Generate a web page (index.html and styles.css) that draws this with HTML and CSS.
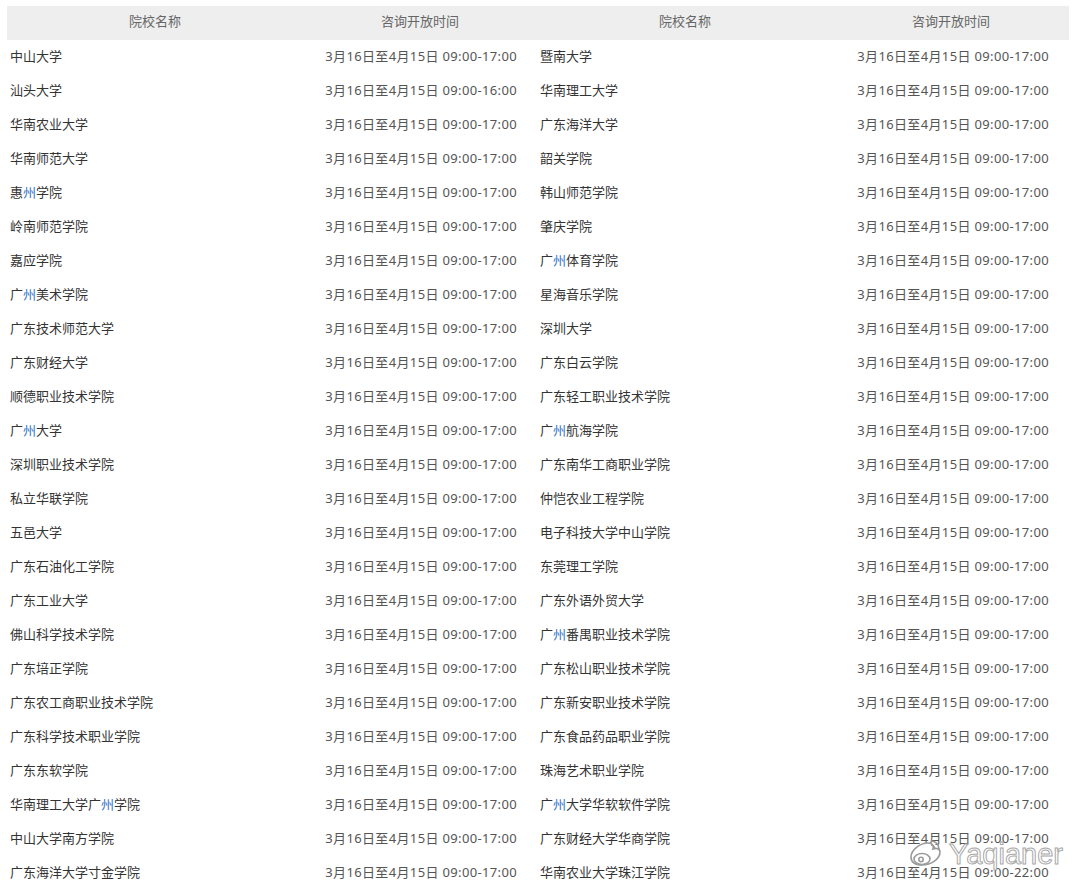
FILE: index.html
```html
<!DOCTYPE html>
<html lang="zh-CN">
<head>
<meta charset="utf-8">
<title>咨询开放时间</title>
<link rel="stylesheet" href="styles.css">
</head>
<body>
<table class="schedule">
  <colgroup>
    <col class="c-name"><col class="c-time"><col class="c-name"><col class="c-time2">
  </colgroup>
  <thead>
    <tr><th>院校名称</th><th>咨询开放时间</th><th>院校名称</th><th>咨询开放时间</th></tr>
  </thead>
  <tbody>
    <tr><td class="name">中山大学</td><td class="time">3月16日至4月15日 09:00-17:00</td><td class="name">暨南大学</td><td class="time">3月16日至4月15日 09:00-17:00</td></tr>
    <tr><td class="name">汕头大学</td><td class="time">3月16日至4月15日 09:00-16:00</td><td class="name">华南理工大学</td><td class="time">3月16日至4月15日 09:00-17:00</td></tr>
    <tr><td class="name">华南农业大学</td><td class="time">3月16日至4月15日 09:00-17:00</td><td class="name">广东海洋大学</td><td class="time">3月16日至4月15日 09:00-17:00</td></tr>
    <tr><td class="name">华南师范大学</td><td class="time">3月16日至4月15日 09:00-17:00</td><td class="name">韶关学院</td><td class="time">3月16日至4月15日 09:00-17:00</td></tr>
    <tr><td class="name">惠<span class="link">州</span>学院</td><td class="time">3月16日至4月15日 09:00-17:00</td><td class="name">韩山师范学院</td><td class="time">3月16日至4月15日 09:00-17:00</td></tr>
    <tr><td class="name">岭南师范学院</td><td class="time">3月16日至4月15日 09:00-17:00</td><td class="name">肇庆学院</td><td class="time">3月16日至4月15日 09:00-17:00</td></tr>
    <tr><td class="name">嘉应学院</td><td class="time">3月16日至4月15日 09:00-17:00</td><td class="name">广<span class="link">州</span>体育学院</td><td class="time">3月16日至4月15日 09:00-17:00</td></tr>
    <tr><td class="name">广<span class="link">州</span>美术学院</td><td class="time">3月16日至4月15日 09:00-17:00</td><td class="name">星海音乐学院</td><td class="time">3月16日至4月15日 09:00-17:00</td></tr>
    <tr><td class="name">广东技术师范大学</td><td class="time">3月16日至4月15日 09:00-17:00</td><td class="name">深圳大学</td><td class="time">3月16日至4月15日 09:00-17:00</td></tr>
    <tr><td class="name">广东财经大学</td><td class="time">3月16日至4月15日 09:00-17:00</td><td class="name">广东白云学院</td><td class="time">3月16日至4月15日 09:00-17:00</td></tr>
    <tr><td class="name">顺德职业技术学院</td><td class="time">3月16日至4月15日 09:00-17:00</td><td class="name">广东轻工职业技术学院</td><td class="time">3月16日至4月15日 09:00-17:00</td></tr>
    <tr><td class="name">广<span class="link">州</span>大学</td><td class="time">3月16日至4月15日 09:00-17:00</td><td class="name">广<span class="link">州</span>航海学院</td><td class="time">3月16日至4月15日 09:00-17:00</td></tr>
    <tr><td class="name">深圳职业技术学院</td><td class="time">3月16日至4月15日 09:00-17:00</td><td class="name">广东南华工商职业学院</td><td class="time">3月16日至4月15日 09:00-17:00</td></tr>
    <tr><td class="name">私立华联学院</td><td class="time">3月16日至4月15日 09:00-17:00</td><td class="name">仲恺农业工程学院</td><td class="time">3月16日至4月15日 09:00-17:00</td></tr>
    <tr><td class="name">五邑大学</td><td class="time">3月16日至4月15日 09:00-17:00</td><td class="name">电子科技大学中山学院</td><td class="time">3月16日至4月15日 09:00-17:00</td></tr>
    <tr><td class="name">广东石油化工学院</td><td class="time">3月16日至4月15日 09:00-17:00</td><td class="name">东莞理工学院</td><td class="time">3月16日至4月15日 09:00-17:00</td></tr>
    <tr><td class="name">广东工业大学</td><td class="time">3月16日至4月15日 09:00-17:00</td><td class="name">广东外语外贸大学</td><td class="time">3月16日至4月15日 09:00-17:00</td></tr>
    <tr><td class="name">佛山科学技术学院</td><td class="time">3月16日至4月15日 09:00-17:00</td><td class="name">广<span class="link">州</span>番禺职业技术学院</td><td class="time">3月16日至4月15日 09:00-17:00</td></tr>
    <tr><td class="name">广东培正学院</td><td class="time">3月16日至4月15日 09:00-17:00</td><td class="name">广东松山职业技术学院</td><td class="time">3月16日至4月15日 09:00-17:00</td></tr>
    <tr><td class="name">广东农工商职业技术学院</td><td class="time">3月16日至4月15日 09:00-17:00</td><td class="name">广东新安职业技术学院</td><td class="time">3月16日至4月15日 09:00-17:00</td></tr>
    <tr><td class="name">广东科学技术职业学院</td><td class="time">3月16日至4月15日 09:00-17:00</td><td class="name">广东食品药品职业学院</td><td class="time">3月16日至4月15日 09:00-17:00</td></tr>
    <tr><td class="name">广东东软学院</td><td class="time">3月16日至4月15日 09:00-17:00</td><td class="name">珠海艺术职业学院</td><td class="time">3月16日至4月15日 09:00-17:00</td></tr>
    <tr><td class="name">华南理工大学广<span class="link">州</span>学院</td><td class="time">3月16日至4月15日 09:00-17:00</td><td class="name">广<span class="link">州</span>大学华软软件学院</td><td class="time">3月16日至4月15日 09:00-17:00</td></tr>
    <tr><td class="name">中山大学南方学院</td><td class="time">3月16日至4月15日 09:00-17:00</td><td class="name">广东财经大学华商学院</td><td class="time">3月16日至4月15日 09:00-17:00</td></tr>
    <tr><td class="name">广东海洋大学寸金学院</td><td class="time">3月16日至4月15日 09:00-17:00</td><td class="name">华南农业大学珠江学院</td><td class="time">3月16日至4月15日 09:00-22:00</td></tr>
  </tbody>
</table>

<div class="watermark">
  <svg class="wm-logo" width="40" height="34" viewBox="0 0 40 34">
    <g fill="none" stroke="#9a9a9a" stroke-width="1.6">
      <path d="M6 20c0-7 9-14 17-14 5 0 6 3 5 6 3-1 7-1 7 3 0 7-9 13-18 13-7 0-11-3-11-8z" fill="#fff"/>
      <ellipse cx="17" cy="22" rx="8" ry="5.5"/>
      <circle cx="16" cy="22.5" r="2.2"/>
      <path d="M26 4c4 0 8 3 8 8"/>
      <path d="M26 8c2 0 4 2 4 4"/>
    </g>
  </svg>
  <span class="wm-text">Yaqianer</span>
</div>
</body>
</html>
```

FILE: styles.css
```css
html, body {
  margin: 0;
  padding: 0;
  background: #ffffff;
}

body {
  font-family: "Noto Sans", "Noto Sans CJK SC", sans-serif;
  font-size: 13px;
  color: #333333;
  position: relative;
  height: 882px;
  overflow: hidden;
}

.schedule {
  border-collapse: collapse;
  margin: 6px 0 0 7px;
  width: 1062px;
  table-layout: fixed;
}

.c-name { width: 296px; }
.c-time { width: 234px; }
.c-time2 { width: 236px; }

.schedule th {
  box-sizing: border-box;
  background: #eeeeee;
  color: #666666;
  font-weight: normal;
  height: 34px;
  padding: 0 0 4px;
  text-align: center;
  vertical-align: middle;
  line-height: 30px;
}

.schedule td {
  box-sizing: border-box;
  height: 34px;
  padding: 0 0 2px;
  vertical-align: middle;
  white-space: nowrap;
  line-height: 32px;
}

.schedule td.name {
  padding-left: 3px;
  color: #333333;
}

.schedule td.time {
  text-align: right;
  padding-right: 20px;
  color: #555555;
  letter-spacing: 0.35px;
}

.link {
  color: #2c74c9;
}

.watermark {
  position: absolute;
  left: 905px;
  top: 837px;
  display: flex;
  align-items: center;
  gap: 4px;
}

.wm-text {
  font-family: "Liberation Sans", Arial, sans-serif;
  font-size: 29px;
  color: #ffffff;
  -webkit-text-stroke: 1px #a8a8a8;
}
```
